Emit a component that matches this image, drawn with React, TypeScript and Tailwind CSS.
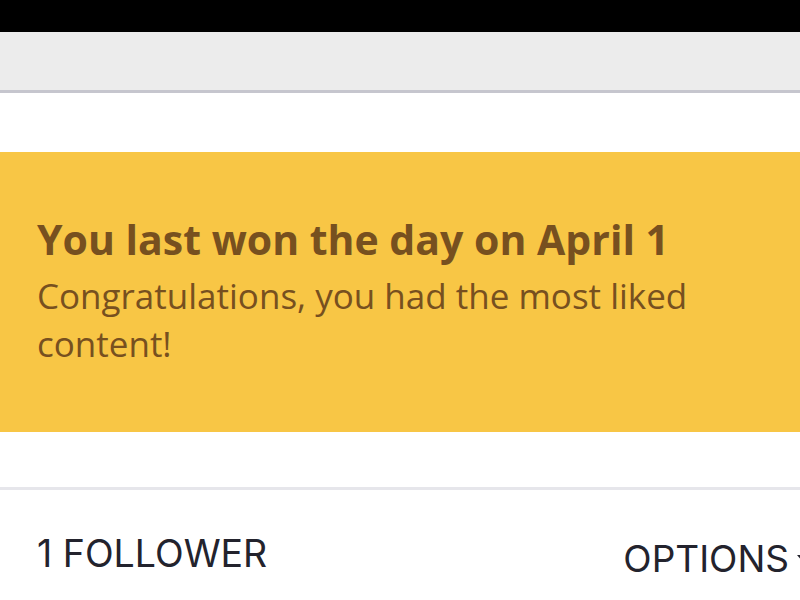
export default function App() {
  return (
    <div className="w-[800px] h-[600px] overflow-hidden bg-white">
      <div className="h-[32px] bg-black" />
      <div className="h-[61px] bg-[#ececec] border-b-[3px] border-[#c6c6ce]" />
      <div className="h-[59px] bg-white" />
      <div
        className="h-[280px] bg-[#f8c645] px-[37px] pt-[63px] text-[#77501f]"
        style={{ fontFamily: '"Open Sans", sans-serif' }}
      >
        <h2 className="text-[41px] font-bold leading-[48px]">
          You last won the day on April 1
        </h2>
        <p className="text-[35px] leading-[48px] mt-[9px] w-[720px]">
          Congratulations, you had the most liked content!
        </p>
      </div>
      <div className="h-[58px] bg-white border-b-[3px] border-[#e6e6eb]" />
      <div
        className="flex items-start pl-[37px] pt-[46px] text-[#23232d] whitespace-nowrap"
        style={{ fontFamily: '"Inter", sans-serif' }}
      >
        <span className="text-[37.5px] leading-[36px]">1 FOLLOWER</span>
        <span className="ml-auto -mr-[9px] text-[37px] leading-[36px] flex items-center gap-[8px] mt-[5px]">
          OPTIONS
          <svg width="12" height="8" viewBox="0 0 12 8" fill="#23232d">
            <path d="M0 0h12L6 7z" />
          </svg>
        </span>
      </div>
    </div>
  );
}
